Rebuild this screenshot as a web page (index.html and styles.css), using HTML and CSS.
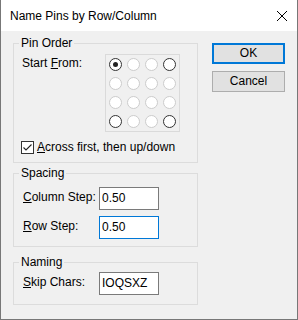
FILE: index.html
```
<!DOCTYPE html>
<html lang="en">
<head>
    <meta charset="UTF-8">
    <title>Name Pins by Row/Column</title>
    <link rel="stylesheet" href="styles.css">
</head>
<body>
<div class="dialog">
    <div class="titlebar">
        <span class="title">Name Pins by Row/Column</span>
        <svg class="close" width="10" height="10" viewBox="0 0 10 10"><path d="M0 0L10 10M10 0L0 10" stroke="#000" stroke-width="1"/></svg>
    </div>
    <div class="content">
        <div class="groups">
            <fieldset class="group group-order">
                <legend>Pin Order</legend>
                <div class="start-row">
                    <span class="start-label">Start <u>F</u>rom:</span>
                    <div class="pin-grid">
                        <span class="pin corner on"></span><span class="pin"></span><span class="pin"></span><span class="pin corner"></span>
                        <span class="pin"></span><span class="pin"></span><span class="pin"></span><span class="pin"></span>
                        <span class="pin"></span><span class="pin"></span><span class="pin"></span><span class="pin"></span>
                        <span class="pin corner"></span><span class="pin"></span><span class="pin"></span><span class="pin corner"></span>
                    </div>
                </div>
                <label class="check">
                    <span class="box"><svg width="11" height="11" viewBox="0 0 11 11"><path d="M1.5 5.5L4 8L9.5 2.5" fill="none" stroke="#222" stroke-width="1.1"/></svg></span>
                    <span><u>A</u>cross first, then up/down</span>
                </label>
            </fieldset>
            <fieldset class="group group-spacing">
                <legend>Spacing</legend>
                <div class="field">
                    <span class="field-label"><u>C</u>olumn Step:</span>
                    <input class="edit" type="text" value="0.50">
                </div>
                <div class="field">
                    <span class="field-label"><u>R</u>ow Step:</span>
                    <input class="edit focused" type="text" value="0.50">
                </div>
            </fieldset>
            <fieldset class="group group-naming">
                <legend>Naming</legend>
                <div class="field">
                    <span class="field-label"><u>S</u>kip Chars:</span>
                    <input class="edit" type="text" value="IOQSXZ">
                </div>
            </fieldset>
        </div>
        <div class="buttons">
            <button class="btn btn-default">OK</button>
            <button class="btn">Cancel</button>
        </div>
    </div>
</div>
</body>
</html>
```
FILE: styles.css
```
body{margin:0;padding:0;background:#fff;}
.dialog{width:298px;height:320px;box-sizing:border-box;border:1px solid #777;border-top:none;background:#f0f0f0;color:#000;font:12px/15px "Liberation Sans",Arial,sans-serif;}
.titlebar{height:31px;background:#fff;display:flex;align-items:center;justify-content:space-between;padding:0 10px 0 9px;}
.title{font-size:12px;margin-top:1px;}
.close{margin-top:1px;}

.content{display:flex;gap:14px;padding:5px 0 0 12px;}
.groups{width:185px;display:flex;flex-direction:column;}
.group{margin:0;min-width:0;border:1px solid #dcdcdc;padding:0 8px;}
.group legend{padding:0 2px;margin-left:-3px;line-height:15px;}
.group-order{padding-top:3px;padding-bottom:7px;}
.group-spacing{margin-top:3px;padding-top:6px;padding-bottom:7px;}
.group-naming{margin-top:8px;padding-top:2px;padding-bottom:9px;}

.start-row{display:flex;align-items:flex-start;}
.start-label{width:83px;flex-shrink:0;margin-top:2px;}
.pin-grid{display:grid;grid-template-columns:repeat(4,13px);column-gap:5px;row-gap:6px;padding:3px;border:1px solid #dadada;}
.pin{width:13px;height:13px;box-sizing:border-box;border:1px solid #ccc;border-radius:50%;background:#fff;position:relative;}
.pin.corner{border-color:#333;}
.pin.on::after{content:"";position:absolute;left:3px;top:3px;width:5px;height:5px;border-radius:50%;background:#222;}

.check{display:flex;align-items:center;gap:3px;margin:8px 0 0 -1px;}
.box{width:13px;height:13px;flex-shrink:0;box-sizing:border-box;border:1px solid #333;background:#fff;display:flex;}

.field{display:flex;align-items:center;}
.field + .field{margin-top:6px;}
.field-label{width:76px;flex-shrink:0;margin-left:1px;margin-top:-2px;}
.edit{width:60px;height:23px;flex-shrink:0;box-sizing:border-box;margin:0;border:1px solid #7a7a7a;background:#fff;padding:0 0 2px 2px;font:12px "Liberation Sans",Arial,sans-serif;color:#000;outline:none;}
.edit.focused{border-color:#0078d7;}

.buttons{display:flex;flex-direction:column;gap:7px;margin-top:7px;}
.btn{width:73px;height:21px;box-sizing:border-box;margin:0;padding:0;border:1px solid #adadad;background:#e1e1e1;font:12px/15px "Liberation Sans",Arial,sans-serif;color:#000;}
.btn-default{border:2px solid #0078d7;}
```
